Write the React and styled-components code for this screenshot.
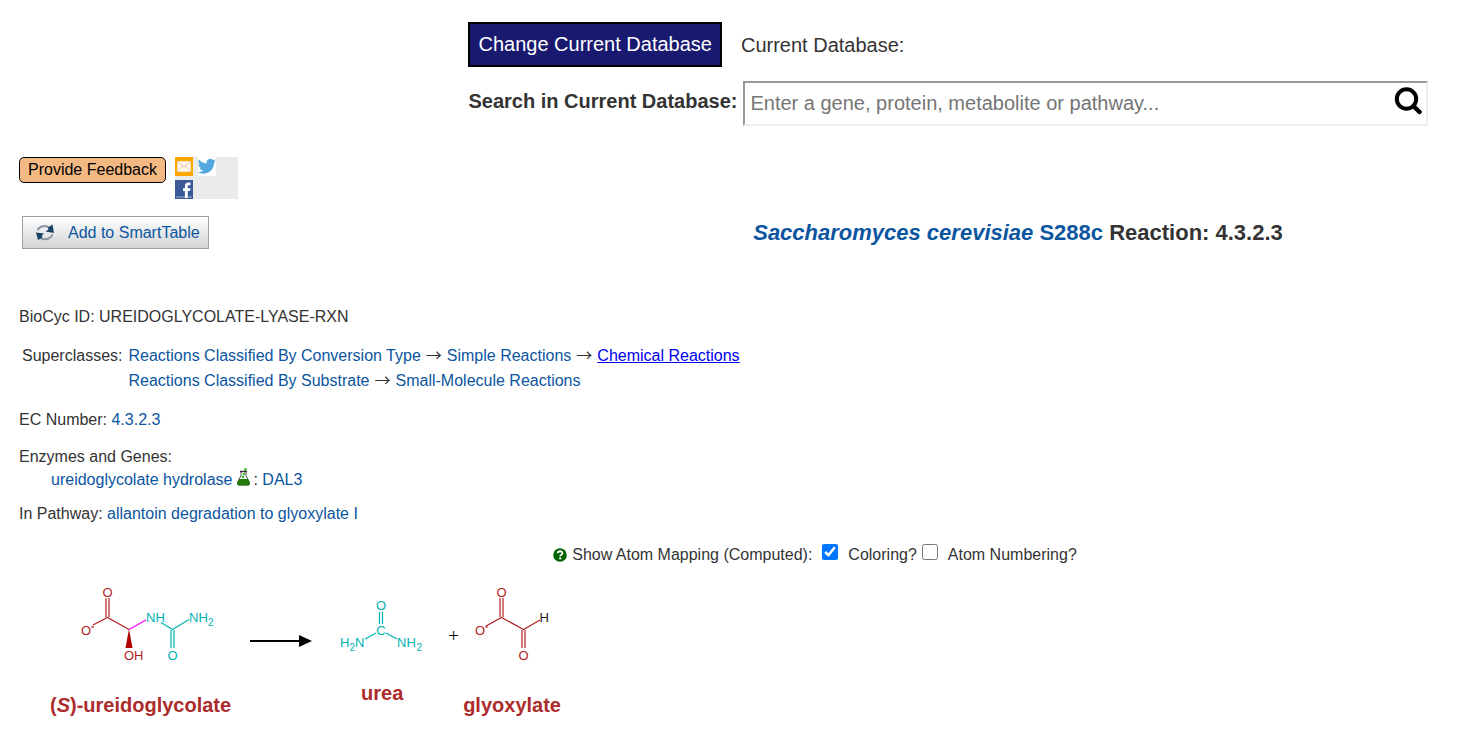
import React from "react";
import styled, { createGlobalStyle } from "styled-components";

const GlobalStyle = createGlobalStyle`
  * { box-sizing: border-box; }
  body {
    margin: 0;
    background: #fff;
    color: #333;
    font-family: "Liberation Sans", Arial, sans-serif;
    font-size: 16px;
    line-height: 22px;
  }
`;

const Header = styled.header`
  display: flex;
  flex-direction: column;
  gap: 14px;
  padding: 22px 36px 0 32%;
  font-size: 20px;
`;

const HeaderRow = styled.div`
  display: flex;
  align-items: center;
  gap: ${(p) => p.$gap}px;
`;

const ChangeButton = styled.button`
  height: 45px;
  padding: 0 8px 2px;
  border: 2px solid #000;
  background: #191970;
  color: #fff;
  font: inherit;
  white-space: nowrap;
`;

const SearchLabel = styled.label`
  font-weight: bold;
  white-space: nowrap;
  padding-bottom: 6px;
`;

const SearchBox = styled.form`
  display: flex;
  align-items: center;
  flex: 1;
  height: 45px;
  border: 2px solid;
  border-color: #999 #eee #eee #999;
`;

const SearchInput = styled.input`
  flex: 1;
  min-width: 0;
  height: 100%;
  padding: 0 5px;
  border: 0;
  outline: 0;
  background: transparent;
  font: inherit;
  &::placeholder { color: #757575; }
`;

const SearchButton = styled.button`
  display: flex;
  padding: 0 4px 4px 0;
  border: 0;
  background: none;
`;

const Main = styled.main`
  padding: 31px 19px 16px;
`;

const ShareBar = styled.div`
  display: flex;
  align-items: flex-start;
  gap: 9px;
`;

const FeedbackButton = styled.button`
  height: 26px;
  width: 147px;
  padding: 0;
  border: 1px solid #000;
  border-radius: 5px;
  background: #f4b983;
  color: #000;
  font: inherit;
  line-height: 22px;
`;

const ShareBox = styled.div`
  display: flex;
  flex-wrap: wrap;
  gap: 4px 5px;
  width: 63px;
  padding-right: 18px;
  background: #ebebeb;
`;

const ShareLink = styled.a`
  display: flex;
  width: 18px;
  height: 19px;
`;

const TitleRow = styled.div`
  display: grid;
  grid-template-columns: 553px 1fr;
  align-items: center;
  margin: 17px -19px 0 0;
`;

const SmartTableButton = styled.button`
  display: flex;
  align-items: center;
  justify-self: start;
  gap: 13px;
  height: 33px;
  margin-left: 3px;
  padding: 0 8px 0 12px;
  border: 1px solid #a0a0a0;
  background: linear-gradient(#fff, #e8e9ea 50%, #d2d4d6);
  color: #0b559f;
  font: inherit;
`;

const Title = styled.h1`
  margin: 0;
  font-size: 22px;
  line-height: 30px;
  text-align: center;
`;

const Link = styled.a`
  color: ${(p) => (p.$underlined ? "#0000ee" : "#0b559f")};
  text-decoration: ${(p) => (p.$underlined ? "underline" : "none")};
`;

const Line = styled.div`
  margin-top: ${(p) => p.$gap || 0}px;
  padding-left: ${(p) => (p.$indent ? 32 : 0)}px;
`;

const Superclasses = styled.div`
  display: flex;
  gap: 6px;
  margin-top: 15px;
  padding-left: 3px;
  line-height: 25px;
`;

const ClassList = styled.ul`
  margin: 0;
  padding: 0;
  list-style: none;
`;

const Then = styled.span`
  margin: 0 5px;
  font-family: "Noto Sans CJK SC", sans-serif;
  line-height: 1;
`;

const FlaskIcon = styled.svg`
  margin: 0 2px 0 4px;
  vertical-align: -1px;
`;

const MappingRow = styled.div`
  display: flex;
  align-items: center;
  justify-content: center;
  gap: 5px;
  margin-top: 19px;
  padding-left: 166px;
`;

const Option = styled.label`
  display: flex;
  align-items: center;
  gap: 10px;
`;

const CheckBox = styled.input`
  width: 16px;
  height: 16px;
  margin: 0 0 6px ${(p) => p.$space || 0}px;
`;

const Reaction = styled.section`
  display: flex;
  align-items: center;
  margin-top: 18px;
  padding-left: 31px;
`;

const Compound = styled.figure`
  display: flex;
  flex-direction: column;
  align-items: center;
  gap: ${(p) => p.$gap}px;
  margin: 0;
`;

const Structure = styled.svg`
  display: block;
`;

const CompoundName = styled.figcaption`
  color: #ac2c2c;
  font-size: 20px;
  font-weight: bold;
`;

const Arrow = styled.svg`
  margin: 0 24px 18px 18px;
`;

const Plus = styled.span`
  width: 10px;
  margin: 0 5px 28px 20px;
  font-family: "Liberation Serif", serif;
  font-size: 19px;
  color: #000;
`;

const RED = "#b22222";
const TEAL = "#00b2b2";

function Bond({ d, color }) {
  return <path d={d} stroke={color} strokeWidth="1.2" fill="none" />;
}

function Atom({ x, y, color, anchor = "start", small, children }) {
  return (
    <text x={x} y={y} fill={color} textAnchor={anchor} fontSize={small ? 10 : 13}>
      {children}
    </text>
  );
}

function Ureidoglycolate() {
  return (
    <Structure width="162" height="80" viewBox="0 0 162 80" aria-label="(S)-ureidoglycolate structure">
      <Bond color={RED} d="M46 14V33M49 14V33M33 41L47.500 33.500L69 45.500" />
      <path d="M69 45L72.500 64H65.500Z" fill="#b00000" />
      <Bond color="#ff00ff" d="M69 45.500L86 36" />
      <Bond color={TEAL} d="M101 38.500L112.500 45.500L129 35.500M111 46V64M114 46V64" />
      <Atom x="47.500" y="13" anchor="middle" color={RED}>O</Atom>
      <Atom x="26" y="51" anchor="middle" color={RED}>O</Atom>
      <Bond color={RED} d="M31 43H34" />
      <Atom x="64" y="76" color={RED}>OH</Atom>
      <Atom x="86" y="38" color={TEAL}>NH</Atom>
      <Atom x="129" y="38" color={TEAL}>NH</Atom>
      <Atom x="148" y="42" small color={TEAL}>2</Atom>
      <Atom x="112.500" y="76" anchor="middle" color={TEAL}>O</Atom>
    </Structure>
  );
}

function Urea() {
  return (
    <Structure width="92" height="58" viewBox="0 0 92 58" aria-label="urea structure">
      <Bond color={TEAL} d="M43.500 16V28M46.500 16V28M40 37L29 43M50 37L61 43" />
      <Atom x="45" y="14" anchor="middle" color={TEAL}>O</Atom>
      <Atom x="45" y="39" anchor="middle" color={TEAL}>C</Atom>
      <Atom x="4" y="51" color={TEAL}>H</Atom>
      <Atom x="13.500" y="55" small color={TEAL}>2</Atom>
      <Atom x="19" y="51" color={TEAL}>N</Atom>
      <Atom x="61" y="51" color={TEAL}>NH</Atom>
      <Atom x="80.500" y="55" small color={TEAL}>2</Atom>
    </Structure>
  );
}

function Glyoxylate() {
  return (
    <Structure width="88" height="80" viewBox="0 0 88 80" aria-label="glyoxylate structure">
      <Bond color={RED} d="M32 14V33M35 14V33M18 42L33.500 33.500L55.500 45.500L72 36M54 46V64M57 46V64M17 43H20" />
      <Atom x="33.500" y="13" anchor="middle" color={RED}>O</Atom>
      <Atom x="12" y="51" anchor="middle" color={RED}>O</Atom>
      <Atom x="71.500" y="38" color="#222">H</Atom>
      <Atom x="55.500" y="76" anchor="middle" color={RED}>O</Atom>
    </Structure>
  );
}

function MailIcon() {
  return (
    <svg width="18" height="19" viewBox="0 0 18 19" aria-hidden="true">
      <rect width="18" height="19" fill="#ffa500" />
      <rect x="2.500" y="4.500" width="13" height="10" rx="1" fill="#fff6e8" stroke="#f1e6d4" />
      <path d="M3 5l6 5 6-5M3 14l4.500-5M15 14l-4.500-5" fill="none" stroke="#ddd0bb" />
    </svg>
  );
}

function TwitterIcon() {
  return (
    <svg width="18" height="19" viewBox="0 0 18 19" aria-hidden="true">
      <rect width="18" height="19" fill="#fff" />
      <path transform="translate(-0.300 0.200) scale(.76)" fill="#55a8df" d="M23.950 4.570a10 10 0 0 1-2.820.780 4.960 4.960 0 0 0 2.160-2.730c-.950.560-2 .960-3.130 1.190a4.920 4.920 0 0 0-8.380 4.480C7.690 8.100 4.070 6.130 1.640 3.160a4.920 4.920 0 0 0 1.520 6.570 4.900 4.900 0 0 1-2.230-.610v.060a4.920 4.920 0 0 0 3.950 4.830 5 5 0 0 1-2.210.080 4.940 4.940 0 0 0 4.600 3.420A9.870 9.870 0 0 1 0 19.540a13.990 13.990 0 0 0 7.550 2.210c9.050 0 14-7.500 14-13.980 0-.210 0-.420-.020-.630a9.940 9.940 0 0 0 2.460-2.550z" />
    </svg>
  );
}

function FacebookIcon() {
  return (
    <svg width="18" height="19" viewBox="0 0 18 19" aria-hidden="true">
      <rect width="18" height="19" fill="#3b5998" />
      <path d="M1 16h16v2H1z" fill="#6d84b4" />
      <path d="M15.500 2.500v2.700h-1.700c-.800 0-1 .400-1 1.100v1.900h2.700l-.400 2.800h-2.300v7H9.900v-7H8V8.200h1.900V6c0-2.300 1.300-3.600 3.500-3.600z" fill="#fff" />
    </svg>
  );
}

function RefreshIcon() {
  return (
    <svg width="20" height="18" viewBox="0 0 20 18" aria-hidden="true">
      <path d="M2.500 6C5 1.500 11 1 14.500 4" fill="none" stroke="#8793a3" strokeWidth="2" />
      <path d="M17.500 10.500C15.500 15.500 9 16.500 5.500 14" fill="none" stroke="#8793a3" strokeWidth="2" />
      <path d="M17.500 0.500L19 9L10.500 7.500L13.500 5.500L13 3.500Z" fill="#1d4268" />
      <path d="M1 8.500L9 9.500L7 11.500L7.500 13.500L3 16Z" fill="#1d4268" />
    </svg>
  );
}

function HelpIcon() {
  return (
    <svg width="14" height="14" viewBox="0 0 14 14" aria-label="Help">
      <circle cx="7" cy="7" r="6.800" fill="#006400" />
      <path d="M4.700 5.300C4.800 2.600 9.400 2.600 9.400 5.200C9.400 6.700 7.200 6.600 7.200 8.300" fill="none" stroke="#fff" strokeWidth="1.800" />
      <circle cx="7.200" cy="10.400" r="1.100" fill="#fff" />
    </svg>
  );
}

export default function App() {
  return (
    <>
      <GlobalStyle />
      <Header>
        <HeaderRow $gap={19}>
          <ChangeButton type="button">Change Current Database</ChangeButton>
          <span>Current Database:</span>
        </HeaderRow>
        <HeaderRow $gap={6}>
          <SearchLabel htmlFor="search">Search in Current Database:</SearchLabel>
          <SearchBox>
            <SearchInput id="search" placeholder="Enter a gene, protein, metabolite or pathway..." />
            <SearchButton type="button" aria-label="Search">
              <svg width="28" height="29" viewBox="0 0 28 29">
                <circle cx="12.500" cy="12" r="9.700" fill="none" stroke="#000" strokeWidth="4" />
                <path d="M19.500 19l6 6" stroke="#000" strokeWidth="4.500" strokeLinecap="round" />
              </svg>
            </SearchButton>
          </SearchBox>
        </HeaderRow>
      </Header>

      <Main>
        <ShareBar>
          <FeedbackButton type="button">Provide Feedback</FeedbackButton>
          <ShareBox>
            <ShareLink href="#mail" aria-label="Email"><MailIcon /></ShareLink>
            <ShareLink href="#twitter" aria-label="Twitter"><TwitterIcon /></ShareLink>
            <ShareLink href="#facebook" aria-label="Facebook"><FacebookIcon /></ShareLink>
          </ShareBox>
        </ShareBar>

        <TitleRow>
          <SmartTableButton type="button"><RefreshIcon />Add to SmartTable</SmartTableButton>
          <Title>
            <Link href="#organism"><i>Saccharomyces cerevisiae</i> S288c</Link> Reaction: 4.3.2.3
          </Title>
        </TitleRow>

        <Line $gap={57}>BioCyc ID: UREIDOGLYCOLATE-LYASE-RXN</Line>
        <Superclasses>
          <span>Superclasses:</span>
          <ClassList>
            <li>
              <Link href="#conversion">Reactions Classified By Conversion Type</Link>
              <Then>→</Then>
              <Link href="#simple">Simple Reactions</Link>
              <Then>→</Then>
              <Link href="#chemical" $underlined>Chemical Reactions</Link>
            </li>
            <li>
              <Link href="#substrate">Reactions Classified By Substrate</Link>
              <Then>→</Then>
              <Link href="#small-molecule">Small-Molecule Reactions</Link>
            </li>
          </ClassList>
        </Superclasses>
        <Line $gap={16}>EC Number: <Link href="#ec">4.3.2.3</Link></Line>
        <Line $gap={15}>Enzymes and Genes:</Line>
        <Line $indent>
          <Link href="#enzyme">ureidoglycolate hydrolase</Link>
          <FlaskIcon width="15" height="18" viewBox="0 0 14 18" aria-label="Experimental evidence">
            <path d="M4.500 4V7.500L1 14.500Q.500 17 2.500 17H11.500Q13.500 17 13 14.500L9.500 7.500V4" fill="#fff" stroke="#555" />
            <path d="M2.500 11H11.500L13.500 15Q13.500 17.500 11.500 17.500H2.500Q.500 17.500 .500 15Z" fill="#257a0c" />
            <path d="M3.500 3.500H10.500" stroke="#333" strokeWidth="1.500" />
            <circle cx="6.500" cy="9" r="1.400" fill="#46b82e" />
            <circle cx="7.500" cy="6" r="1.200" fill="#46b82e" />
            <circle cx="9" cy="1.500" r="1.400" fill="#46b82e" />
          </FlaskIcon>
          : <Link href="#gene">DAL3</Link>
        </Line>
        <Line $gap={12}>In Pathway: <Link href="#pathway">allantoin degradation to glyoxylate I</Link></Line>

        <MappingRow>
          <HelpIcon />
          <span>Show Atom Mapping (Computed):</span>
          <Option>
            <CheckBox type="checkbox" $space={5} defaultChecked />
            Coloring?
          </Option>
          <Option>
            <CheckBox type="checkbox" />
            Atom Numbering?
          </Option>
        </MappingRow>

        <Reaction>
          <Compound $gap={30}>
            <Ureidoglycolate />
            <CompoundName>(<i>S</i>)-ureidoglycolate</CompoundName>
          </Compound>
          <Arrow width="63" height="14" viewBox="0 0 63 14" aria-label="reacts to form">
            <path d="M1 7H52" stroke="#000" strokeWidth="2" />
            <path d="M50 1L63 7L50 13Z" />
          </Arrow>
          <Compound $gap={28}>
            <Urea />
            <CompoundName>urea</CompoundName>
          </Compound>
          <Plus>+</Plus>
          <Compound $gap={30}>
            <Glyoxylate />
            <CompoundName>glyoxylate</CompoundName>
          </Compound>
        </Reaction>
      </Main>
    </>
  );
}
